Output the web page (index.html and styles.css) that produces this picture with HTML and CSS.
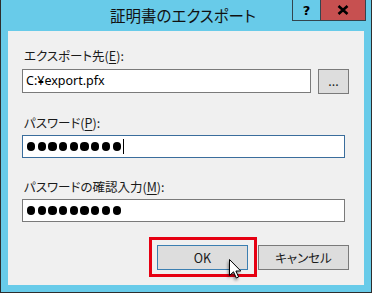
FILE: index.html
```html
<!DOCTYPE html>
<html lang="ja">
<head>
  <meta charset="UTF-8" />
  <title>証明書のエクスポート</title>
  <link rel="stylesheet" href="styles.css">
</head>
<body>
  <div class="window">
    <div class="titlebar">
      <div class="title">証明書のエクスポート</div>
      <div class="caption">
        <span class="cap-btn help">?</span>
        <span class="cap-btn close">
          <svg width="12" height="10" viewBox="0 0 12 10"><path d="M1.5 1 L10.5 9 M10.5 1 L1.5 9" stroke="#000" stroke-width="2.6" /></svg>
        </span>
      </div>
    </div>

    <div class="client">
      <div class="field-label first">エクスポート先(<u>E</u>):</div>
      <div class="file-row">
        <div class="textbox file">C:¥export.pfx</div>
        <div class="btn browse">...</div>
      </div>

      <div class="field-label">パスワード(<u>P</u>):</div>
      <div class="textbox secret focused">
        <span class="dot"></span><span class="dot"></span><span class="dot"></span>
        <span class="dot"></span><span class="dot"></span><span class="dot"></span>
        <span class="dot"></span><span class="dot"></span><span class="dot"></span>
        <span class="caret"></span>
      </div>

      <div class="field-label">パスワードの確認入力(<u>M</u>):</div>
      <div class="textbox secret">
        <span class="dot"></span><span class="dot"></span><span class="dot"></span>
        <span class="dot"></span><span class="dot"></span><span class="dot"></span>
        <span class="dot"></span><span class="dot"></span><span class="dot"></span>
      </div>

      <div class="actions">
        <div class="btn default">OK
          <svg class="pointer" width="13" height="20" viewBox="0 0 13 20"><path d="M0.5 0.5 L0.5 16.5 L4.5 12.8 L7.3 19 L9.6 18 L6.9 12 L11.8 12 Z" fill="#fff" stroke="#000" stroke-width="1" stroke-linejoin="miter" /></svg>
        </div>
        <div class="btn">キャンセル</div>
      </div>
    </div>
  </div>
</body>
</html>
```

FILE: styles.css
```css
body {
  margin: 0;
  font-family: "Noto Sans CJK JP", sans-serif;
  font-feature-settings: "palt";
}
.window {
  width: 372px;
  height: 293px;
  box-sizing: border-box;
  background: #68cbe9;
  border: 1px solid #2d2d2d;
  border-top: 0;
  padding: 0 7px 7px;
  display: flex;
  flex-direction: column;
}
.titlebar {
  height: 31px;
  display: grid;
  grid-template-columns: 1fr auto;
}
.title {
  grid-area: 1 / 1 / 2 / 3;
  justify-self: center;
  font-size: 15.5px;
  line-height: 31px;
  color: #111;
  margin-left: -6px;
}
.caption {
  grid-area: 1 / 2 / 2 / 3;
  align-self: start;
  display: flex;
  margin-right: -2px;
}
.cap-btn {
  height: 21px;
  box-sizing: border-box;
  border: 1px solid #33454f;
  border-top: 0;
  display: flex;
  align-items: center;
  justify-content: center;
}
.help {
  width: 29px;
  font-family: "DejaVu Sans", sans-serif;
  font-weight: bold;
  font-size: 13px;
  padding-top: 1px;
}
.close {
  width: 45px;
  border-left: 0;
  background: #c75050;
}
.client {
  flex: 1;
  background: #f0f0f0;
  padding: 17px 15px 0 14px;
  font-size: 12.5px;
  color: #1a1a1a;
}
.field-label {
  line-height: 16px;
  height: 16px;
  margin-top: 21px;
  padding-left: 2px;
}
.field-label.first {
  margin-top: 0;
}
.field-label u {
  text-underline-offset: 2px;
}
.file-row {
  display: flex;
  align-items: flex-start;
  gap: 7px;
  margin-top: 5px;
}
.textbox {
  box-sizing: border-box;
  background: #fff;
  border: 1px solid #7a7a7a;
  height: 23px;
  width: 323px;
  margin-top: 4px;
}
.textbox.file {
  width: 289px;
  height: 24px;
  margin-top: 0;
  padding-left: 3px;
  line-height: 22px;
  font-family: "Noto Sans", "Noto Sans CJK JP", sans-serif;
  font-size: 12.5px;
  color: #000;
}
.textbox.focused {
  border-color: #3a6d9c;
}
.textbox.secret {
  display: flex;
  align-items: center;
  gap: 2.5px;
  padding-left: 4px;
}
.dot {
  width: 8.2px;
  height: 8.2px;
  border-radius: 50%;
  background: #000;
}
.caret {
  width: 1px;
  height: 15px;
  background: #000;
  margin-left: -0.5px;
}
.btn {
  box-sizing: border-box;
  background: #dddddd;
  border: 1px solid #7a7a7a;
  height: 25px;
  display: flex;
  align-items: center;
  justify-content: center;
}
.browse {
  width: 31px;
  padding-bottom: 2px;
}
.actions {
  display: flex;
  justify-content: flex-end;
  gap: 10px;
  margin-top: 23px;
}
.actions .btn {
  width: 91px;
}
.btn.default {
  border-color: #3c7fb1;
  position: relative;
}
.btn.default::before {
  content: "";
  position: absolute;
  top: -9px;
  left: -9px;
  right: -10px;
  bottom: -8px;
  border: 3px solid #e60012;
}
.pointer {
  position: absolute;
  left: 71px;
  top: 13px;
  filter: drop-shadow(-1px 2px 1.5px rgba(0, 0, 0, 0.45));
}
```
